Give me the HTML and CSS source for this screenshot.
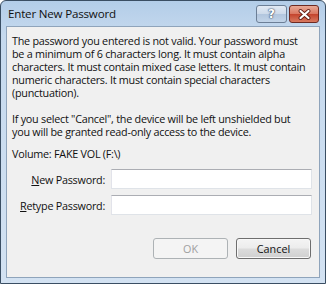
FILE: index.html
```html
<!DOCTYPE html>
<html>
<head>
<meta charset="utf-8">
<link rel="stylesheet" href="styles.css">
</head>
<body>
<div class="window">
  <div class="titlebar">
    <span class="title">Enter New Password</span>
    <div class="caption-buttons">
      <div class="cbtn help">?</div>
      <div class="cbtn close">
        <svg width="13" height="11" viewBox="0 0 13 11"><path d="M2.5 2 L10.5 9 M10.5 2 L2.5 9" stroke="#5e1a12" stroke-width="3.8" stroke-linecap="round"/><path d="M2.5 2 L10.5 9 M10.5 2 L2.5 9" stroke="#fff" stroke-width="2.2" stroke-linecap="round"/></svg>
      </div>
    </div>
  </div>
  <div class="client">
    <p class="msg">The password you entered is not valid. Your password must<br>be a minimum of 6 characters long. It must contain alpha<br>characters. It must contain mixed case letters. It must contain<br>numeric characters. It must contain special characters<br>(punctuation).</p>
    <p class="msg second">If you select "Cancel", the device will be left unshielded but<br>you will be granted read-only access to the device.</p>
    <p class="msg volume">Volume: FAKE VOL (F:\)</p>
    <div class="form">
      <label class="lbl"><u>N</u>ew Password:</label>
      <div class="field"></div>
      <label class="lbl"><u>R</u>etype Password:</label>
      <div class="field"></div>
    </div>
    <div class="actions">
      <div class="btn disabled">OK</div>
      <div class="btn default">Cancel</div>
    </div>
  </div>
</div>
</body>
</html>
```
FILE: styles.css
```css
html, body {
  margin: 0;
  padding: 0;
}
body {
  width: 326px;
  height: 284px;
  overflow: hidden;
  font-family: "Open Sans", "Noto Sans", sans-serif;
}
.window {
  box-sizing: border-box;
  width: 326px;
  height: 284px;
  border: 1px solid #3a4e63;
  border-radius: 6px 6px 0 0;
  background: linear-gradient(180deg, #b3cde8 0%, #c5d9ee 12%, #d3e2f2 100%);
  display: flex;
  flex-direction: column;
  padding: 0 5px 5px 5px;
}
.titlebar {
  height: 25px;
  flex: none;
  display: flex;
  align-items: flex-start;
  justify-content: space-between;
}
.title {
  font-size: 11.6px;
  color: #111;
  margin-top: 5px;
  margin-left: 2px;
  letter-spacing: -0.2px;
}
.caption-buttons {
  display: flex;
  gap: 2px;
  margin-top: 4px;
  margin-right: 1px;
}
.cbtn {
  box-sizing: border-box;
  height: 18px;
  border: 1px solid #6c7f96;
  border-radius: 3px;
  display: flex;
  align-items: center;
  justify-content: center;
}
.help {
  width: 31px;
  background: linear-gradient(180deg, #e2eaf4 0%, #cddaea 48%, #b2c6de 52%, #c2d4e8 100%);
  color: #fff;
  font-family: "DejaVu Sans", sans-serif;
  font-weight: bold;
  font-size: 12px;
  text-shadow: 0 0 1px #42556e, 0 0 1px #42556e, 0 0 2px #42556e;
}
.close {
  width: 30px;
  border-color: #6d2a22;
  background: linear-gradient(180deg, #e8a996 0%, #da7862 48%, #c4442d 52%, #d8795f 100%);
}
.client {
  flex: 1;
  background: #f0f0f0;
  border: 1px solid #8fa4bb;
  padding: 7px 6px 0 5px;
  display: flex;
  flex-direction: column;
  font-size: 10.8px;
  color: #111;
}
.msg {
  margin: 0;
  line-height: 13px;
  letter-spacing: -0.25px;
  white-space: nowrap;
}
.second {
  margin-top: 13px;
}
.volume {
  margin-top: 9px;
}
.form {
  display: grid;
  grid-template-columns: 93px 201px;
  column-gap: 6px;
  row-gap: 6px;
  align-items: center;
  margin-top: 9px;
}
.lbl {
  text-align: right;
  letter-spacing: -0.25px;
  white-space: nowrap;
}
.lbl u {
  text-decoration-thickness: 1px;
  text-underline-offset: 1px;
}
.field {
  height: 20px;
  box-sizing: border-box;
  background: #fff;
  border: 1px solid #dfe3e8;
  border-top-color: #abadb3;
  border-left-color: #e2e3ea;
}
.actions {
  display: flex;
  justify-content: flex-end;
  gap: 8px;
  margin-top: 23px;
  padding-right: 2px;
}
.btn {
  box-sizing: border-box;
  width: 75px;
  height: 21px;
  border-radius: 3px;
  display: flex;
  align-items: center;
  justify-content: center;
  font-size: 10.8px;
}
.disabled {
  border: 1px solid #adb2b5;
  background: #f4f4f4;
  color: #a0a0a0;
}
.default {
  border: 1px solid #6e6e6e;
  background: linear-gradient(180deg, #f4f4f4 0%, #ececec 48%, #dcdcdc 52%, #d0d0d0 100%);
  box-shadow: inset 0 0 0 1px #f8f8f8;
  color: #111;
}
```
